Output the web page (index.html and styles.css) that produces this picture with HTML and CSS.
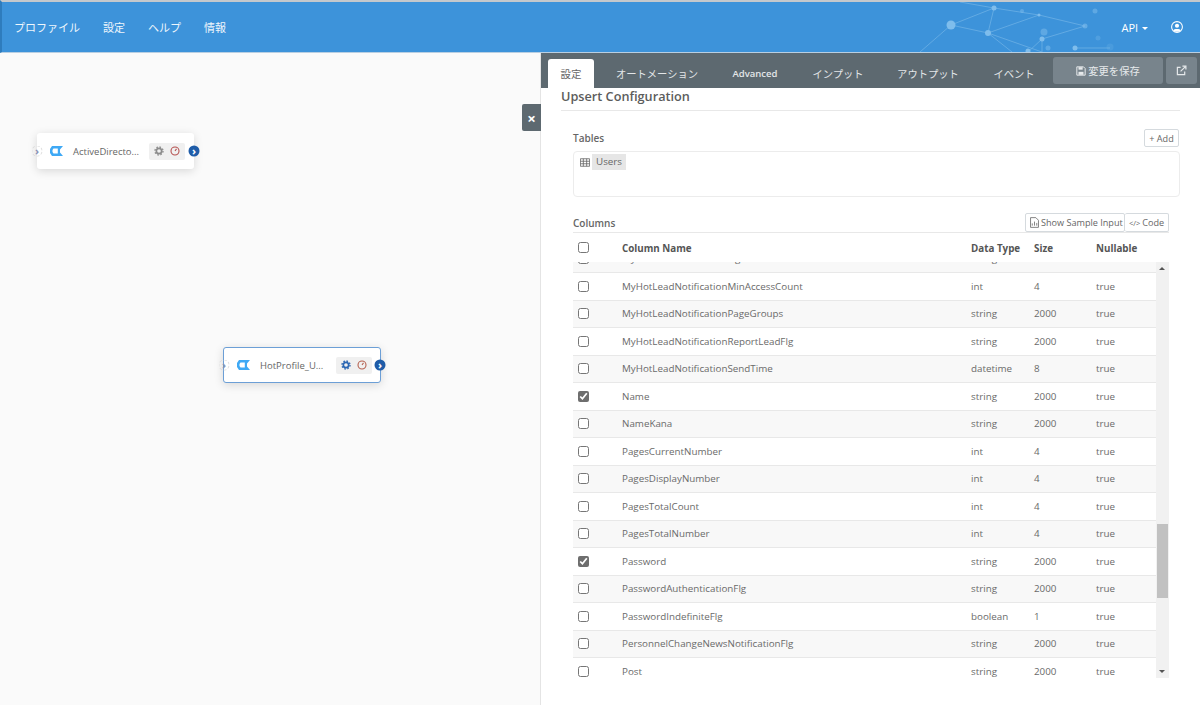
FILE: index.html
```html
<!DOCTYPE html>
<html lang="ja">
<head>
    <meta charset="UTF-8">
    <title>Upsert Configuration</title>
    <link rel="stylesheet" href="styles.css">
</head>
<body>
    <header class="topbar">
        <nav class="topnav">
            <a>プロファイル</a>
            <a>設定</a>
            <a>ヘルプ</a>
            <a>情報</a>
        </nav>
        <svg class="network" viewBox="0 0 220 50" width="220" height="50">
            <g stroke="#8cc4ee" stroke-width="0.8" opacity="0.6" fill="none">
                <path d="M31 23 L74 6 L68 31 L31 23"/>
                <path d="M74 6 L119 13 L68 31 L92 50"/>
                <path d="M68 31 L122 50"/>
                <path d="M119 13 L165 24 L122 37 L108 50"/>
                <path d="M122 37 V50"/>
                <path d="M155 46 L190 46"/>
                <path d="M31 23 L0 50"/>
                <path d="M74 6 L40 0"/>
            </g>
            <g fill="#7fbdec">
                <circle cx="31" cy="23" r="4.5"/>
                <circle cx="74" cy="6" r="2.5"/>
                <circle cx="68" cy="31" r="3"/>
                <circle cx="119" cy="13" r="1.5"/>
                <circle cx="102" cy="9" r="2" opacity="0.5"/>
                <circle cx="122" cy="37" r="2.5"/>
                <circle cx="108" cy="49" r="2.5"/>
                <circle cx="155" cy="46" r="2.5"/>
                <circle cx="165" cy="24" r="2.5" opacity="0.6"/>
                <circle cx="124" cy="30" r="3.5" opacity="0.5"/>
                <circle cx="128" cy="46" r="2.5" opacity="0.5"/>
                <circle cx="175" cy="9" r="2.5" opacity="0.5"/>
                <circle cx="178" cy="36" r="2.5" opacity="0.3"/>
                <circle cx="190" cy="45" r="3.5" opacity="0.2"/>
            </g>
        </svg>
        <div class="topright">
            <a class="api">API <span class="caret"></span></a>
            <svg class="user" viewBox="0 0 16 16" width="12" height="12">
                <circle cx="8" cy="8" r="7.2" fill="none" stroke="#fff" stroke-width="1.4"/>
                <circle cx="8" cy="6.3" r="2.8" fill="#fff"/>
                <path d="M3 12.6 C4 10 12 10 13 12.6 C11 15 5 15 3 12.6Z" fill="#fff"/>
            </svg>
        </div>
    </header>

    <main class="workspace">
        <section class="canvas">
            <div class="node node-source">
                <span class="port port-in">›</span>
                <svg class="node-icon" viewBox="0 0 14 12" width="14" height="12">
                    <path d="M3 1 H14 L11 4.5 V7.5 L14 11 H3 L1 8 V4 Z M4.5 3.5 L3.5 5 V7 L4.5 8.5 H8.8 V3.5 Z" fill="#3fa9f5" fill-rule="evenodd"/>
                </svg>
                <span class="node-name">ActiveDirecto...</span>
                <div class="node-actions">
                    <svg viewBox="0 0 12 12" width="10" height="10">
                        <circle cx="6" cy="6" r="3.2" fill="none" stroke="#8c8c8c" stroke-width="2"/>
                        <circle cx="6" cy="6" r="4.8" fill="none" stroke="#8c8c8c" stroke-width="1.6" stroke-dasharray="1.9 1.87"/>
                    </svg>
                    <svg viewBox="0 0 12 12" width="10" height="10">
                        <circle cx="6" cy="6" r="4.8" fill="none" stroke="#b5504f" stroke-width="1.3"/>
                        <path d="M6 6 L7.8 3.4" stroke="#b5504f" stroke-width="1.3"/>
                    </svg>
                </div>
                <span class="port port-out">›</span>
            </div>

            <div class="node node-target">
                <span class="port port-in">›</span>
                <svg class="node-icon" viewBox="0 0 14 12" width="14" height="12">
                    <path d="M3 1 H14 L11 4.5 V7.5 L14 11 H3 L1 8 V4 Z M4.5 3.5 L3.5 5 V7 L4.5 8.5 H8.8 V3.5 Z" fill="#3fa9f5" fill-rule="evenodd"/>
                </svg>
                <span class="node-name">HotProfile_U...</span>
                <div class="node-actions">
                    <svg viewBox="0 0 12 12" width="10" height="10">
                        <circle cx="6" cy="6" r="3.2" fill="none" stroke="#2a66b3" stroke-width="2"/>
                        <circle cx="6" cy="6" r="4.8" fill="none" stroke="#2a66b3" stroke-width="1.6" stroke-dasharray="1.9 1.87"/>
                    </svg>
                    <svg viewBox="0 0 12 12" width="10" height="10">
                        <circle cx="6" cy="6" r="4.8" fill="none" stroke="#b5604f" stroke-width="1.3"/>
                        <path d="M6 6 L7.8 3.4" stroke="#b5604f" stroke-width="1.3"/>
                    </svg>
                </div>
                <span class="port port-out">›</span>
            </div>

            <button class="panel-close">×</button>
        </section>

        <section class="panel">
            <div class="tabs">
                <a class="tab tab-active">設定</a>
                <a class="tab tab-auto">オートメーション</a>
                <a class="tab tab-adv">Advanced</a>
                <a class="tab tab-in">インプット</a>
                <a class="tab tab-out">アウトプット</a>
                <a class="tab tab-event">イベント</a>
                <button class="save-btn">
                    <svg viewBox="0 0 12 12" width="10" height="10">
                        <path d="M1 1 H9 L11 3 V11 H1 Z" fill="none" stroke="#e6e9eb" stroke-width="1.2"/>
                        <rect x="3" y="1.4" width="5" height="3" fill="#e6e9eb"/>
                        <rect x="3" y="7" width="6" height="3.6" fill="#e6e9eb"/>
                    </svg>
                    変更を保存
                </button>
                <button class="popout-btn">
                    <svg viewBox="0 0 12 12" width="11" height="11">
                        <path d="M9.5 7 V10.5 H1.5 V2.5 H5" fill="none" stroke="#e6e9eb" stroke-width="1.3"/>
                        <path d="M5 7 L10 2 M7 1.2 H10.8 V5" fill="none" stroke="#e6e9eb" stroke-width="1.3"/>
                    </svg>
                </button>
            </div>

            <div class="panel-body">
                <h3 class="section-title">Upsert Configuration</h3>

                <div class="tables-head">
                    <label>Tables</label>
                    <button class="small-btn">+ Add</button>
                </div>
                <div class="tables-box">
                    <svg class="table-icon" viewBox="0 0 12 10" width="10" height="9">
                        <path d="M.5 .5 H11.5 V9.5 H.5 Z M.5 3.5 H11.5 M.5 6.5 H11.5 M4 .5 V9.5 M8 .5 V9.5" fill="none" stroke="#666" stroke-width="1"/>
                    </svg>
                    <span class="chip">Users</span>
                </div>

                <div class="columns-block">
                    <div class="columns-head">
                        <label>Columns</label>
                        <div class="btn-group">
                            <button class="small-btn btn-sample">
                                <svg viewBox="0 0 10 12" width="9" height="11">
                                    <path d="M.6 .6 H6.5 L9.4 3.5 V11.4 H.6 Z" fill="none" stroke="#777" stroke-width="1"/>
                                    <path d="M2.5 9.5 V7 M5 9.5 V5 M7.5 9.5 V6.5" stroke="#777" stroke-width="1"/>
                                </svg>
                                Show Sample Input
                            </button>
                            <button class="small-btn btn-code"><span class="code-glyph">&lt;/&gt;</span> Code</button>
                        </div>
                    </div>

                    <div class="col-row col-header">
                        <span class="col-check"><input type="checkbox"></span>
                        <span class="col-name">Column Name</span>
                        <span class="col-type">Data Type</span>
                        <span class="col-size">Size</span>
                        <span class="col-null">Nullable</span>
                    </div>

                    <div class="col-scroll">
                        <div class="col-rows">
                            <div class="col-row"><span class="col-check"><input type="checkbox"></span><span class="col-name">MyHotLeadNotificationFlg</span><span class="col-type">string</span><span class="col-size">2000</span><span class="col-null">true</span></div>
                            <div class="col-row"><span class="col-check"><input type="checkbox"></span><span class="col-name">MyHotLeadNotificationMinAccessCount</span><span class="col-type">int</span><span class="col-size">4</span><span class="col-null">true</span></div>
                            <div class="col-row"><span class="col-check"><input type="checkbox"></span><span class="col-name">MyHotLeadNotificationPageGroups</span><span class="col-type">string</span><span class="col-size">2000</span><span class="col-null">true</span></div>
                            <div class="col-row"><span class="col-check"><input type="checkbox"></span><span class="col-name">MyHotLeadNotificationReportLeadFlg</span><span class="col-type">string</span><span class="col-size">2000</span><span class="col-null">true</span></div>
                            <div class="col-row"><span class="col-check"><input type="checkbox"></span><span class="col-name">MyHotLeadNotificationSendTime</span><span class="col-type">datetime</span><span class="col-size">8</span><span class="col-null">true</span></div>
                            <div class="col-row"><span class="col-check"><input type="checkbox" checked></span><span class="col-name">Name</span><span class="col-type">string</span><span class="col-size">2000</span><span class="col-null">true</span></div>
                            <div class="col-row"><span class="col-check"><input type="checkbox"></span><span class="col-name">NameKana</span><span class="col-type">string</span><span class="col-size">2000</span><span class="col-null">true</span></div>
                            <div class="col-row"><span class="col-check"><input type="checkbox"></span><span class="col-name">PagesCurrentNumber</span><span class="col-type">int</span><span class="col-size">4</span><span class="col-null">true</span></div>
                            <div class="col-row"><span class="col-check"><input type="checkbox"></span><span class="col-name">PagesDisplayNumber</span><span class="col-type">int</span><span class="col-size">4</span><span class="col-null">true</span></div>
                            <div class="col-row"><span class="col-check"><input type="checkbox"></span><span class="col-name">PagesTotalCount</span><span class="col-type">int</span><span class="col-size">4</span><span class="col-null">true</span></div>
                            <div class="col-row"><span class="col-check"><input type="checkbox"></span><span class="col-name">PagesTotalNumber</span><span class="col-type">int</span><span class="col-size">4</span><span class="col-null">true</span></div>
                            <div class="col-row"><span class="col-check"><input type="checkbox" checked></span><span class="col-name">Password</span><span class="col-type">string</span><span class="col-size">2000</span><span class="col-null">true</span></div>
                            <div class="col-row"><span class="col-check"><input type="checkbox"></span><span class="col-name">PasswordAuthenticationFlg</span><span class="col-type">string</span><span class="col-size">2000</span><span class="col-null">true</span></div>
                            <div class="col-row"><span class="col-check"><input type="checkbox"></span><span class="col-name">PasswordIndefiniteFlg</span><span class="col-type">boolean</span><span class="col-size">1</span><span class="col-null">true</span></div>
                            <div class="col-row"><span class="col-check"><input type="checkbox"></span><span class="col-name">PersonnelChangeNewsNotificationFlg</span><span class="col-type">string</span><span class="col-size">2000</span><span class="col-null">true</span></div>
                            <div class="col-row"><span class="col-check"><input type="checkbox"></span><span class="col-name">Post</span><span class="col-type">string</span><span class="col-size">2000</span><span class="col-null">true</span></div>
                        </div>
                        <div class="scrollbar">
                            <span class="arrow arrow-up"></span>
                            <span class="thumb"></span>
                            <span class="arrow arrow-down"></span>
                        </div>
                    </div>
                </div>
            </div>
        </section>
    </main>
</body>
</html>
```

FILE: styles.css
```css
* {
    margin: 0;
    padding: 0;
    box-sizing: border-box;
}

body {
    font-family: "Open Sans", "Noto Sans CJK JP", sans-serif;
    font-size: 10.5px;
    color: #666;
    background: #fff;
    height: 705px;
    overflow: hidden;
}

button {
    font-family: inherit;
}

/* top bar */
.topbar {
    height: 53px;
    background: #3d93da;
    border-top: 2px solid #c4c8cc;
    border-left: 2px solid #2e7cbd;
    border-bottom: 1px solid #b9cfe2;
    display: flex;
    align-items: center;
    padding: 0 17px 0 12px;
    position: relative;
}

.topnav {
    display: flex;
    gap: 23px;
    color: #eef6fc;
    font-size: 11px;
}

.network {
    position: absolute;
    left: 918px;
    top: 0;
}

.topright {
    margin-left: auto;
    display: flex;
    align-items: center;
    gap: 23px;
    color: #fff;
    font-size: 11px;
    position: relative;
}

.caret {
    display: inline-block;
    border-top: 3px solid #fff;
    border-left: 3px solid transparent;
    border-right: 3px solid transparent;
    vertical-align: middle;
    margin-left: 1px;
}

.user {
    display: block;
}

/* layout */
.workspace {
    display: flex;
    height: 652px;
}

.canvas {
    width: 541px;
    background: #fafafa;
    border-right: 1px solid #e4e4e4;
    position: relative;
}

.panel {
    flex: 1;
    min-width: 0;
}

/* flow nodes */
.node {
    position: absolute;
    height: 36px;
    background: #fff;
    border-radius: 3px;
    box-shadow: 0 2px 10px rgba(0,0,0,0.14);
    display: flex;
    align-items: center;
    padding-left: 12px;
    color: #666;
}

.node-source {
    left: 37px;
    top: 80px;
    width: 157px;
}

.node-target {
    left: 223px;
    top: 294px;
    width: 158px;
    border: 1px solid #6c9fd6;
}

.node-name {
    margin-left: 10px;
    width: 76px;
    white-space: nowrap;
    font-size: 9.5px;
}

.node-actions {
    width: 36px;
    height: 17px;
    background: #f0f0f0;
    border-radius: 2px;
    display: flex;
    align-items: center;
    justify-content: space-around;
    padding: 0 2px;
}

.port {
    position: absolute;
    top: 50%;
    transform: translate(-50%, -50%);
    width: 11px;
    height: 11px;
    border-radius: 50%;
    display: flex;
    align-items: center;
    justify-content: center;
    font-size: 11px;
    font-weight: 700;
    line-height: 1;
    padding-bottom: 2px;
}

.port-in {
    left: 0;
    color: #8a93b5;
    border: 1px dashed #ddd;
}

.port-out {
    left: 100%;
    background: #1f5ca8;
    color: #fff;
}

.panel-close {
    position: absolute;
    right: -1px;
    top: 51px;
    width: 19px;
    height: 27px;
    background: #5d6970;
    color: #fff;
    border: 0;
    border-radius: 2px 0 0 2px;
    font-size: 15px;
    font-weight: 700;
}

/* tabs */
.tabs {
    height: 35px;
    background: #5d6970;
    display: flex;
    align-items: flex-end;
    padding-left: 7px;
    position: relative;
    color: #e3e6e8;
    font-size: 10.3px;
}

.tab {
    height: 29px;
    display: flex;
    align-items: center;
    justify-content: center;
    flex-shrink: 0;
}

.tab-active {
    width: 46px;
    background: #fff;
    color: #666;
    font-size: 10.5px;
    border-radius: 3px 3px 0 0;
}

.tab-auto {
    width: 126px;
}

.tab-adv {
    width: 70px;
    font-size: 9.5px;
    font-weight: 600;
}

.tab-in {
    width: 96px;
}

.tab-out {
    width: 84px;
}

.tab-event {
    width: 88px;
}

.save-btn,
.popout-btn {
    position: absolute;
    top: 4px;
    height: 27px;
    background: #78848c;
    border: 0;
    border-radius: 3px;
    color: #e6e9eb;
    font-size: 10.3px;
    display: flex;
    align-items: center;
    justify-content: center;
    gap: 2px;
}

.save-btn {
    left: 512px;
    width: 110px;
}

.popout-btn {
    left: 625px;
    width: 31px;
}

/* panel body */
.panel-body {
    padding: 0 20px;
}

.section-title {
    font-size: 12.7px;
    font-weight: 600;
    color: #5c5c5c;
    height: 23px;
    line-height: 17px;
    border-bottom: 1px solid #e8e8e8;
}

.tables-head {
    display: flex;
    justify-content: space-between;
    align-items: flex-start;
    margin: 18px 1px 4px 12px;
    height: 18px;
}

.tables-head label,
.columns-head label {
    font-size: 10px;
    font-weight: 600;
    color: #666;
    line-height: 18px;
}

.small-btn {
    background: #fff;
    border: 1px solid #d5dade;
    border-radius: 2px;
    color: #666;
    font-size: 9.1px;
    height: 19px;
    padding: 0 4px;
    display: inline-flex;
    align-items: center;
    gap: 2px;
    white-space: nowrap;
}

.tables-head .small-btn {
    height: 18px;
    width: 35px;
    justify-content: center;
}

.tables-box {
    height: 46px;
    margin-left: 12px;
    border: 1px solid #ececec;
    border-radius: 4px;
    padding: 2px 6px;
    display: flex;
    align-items: flex-start;
    gap: 2px;
}

.table-icon {
    margin-top: 4px;
}

.chip {
    background: #e6e6e6;
    font-size: 9.8px;
    padding: 0 4px;
    height: 16px;
    line-height: 16px;
}

/* columns */
.columns-block {
    margin: 16px 11px 0 12px;
}

.columns-head {
    display: flex;
    align-items: center;
    justify-content: space-between;
    height: 20px;
    border-bottom: 1px solid #e8e8e8;
}

.btn-group {
    display: flex;
}

.btn-sample {
    width: 100px;
    padding: 0 0 0 4px;
}

.btn-code {
    width: 44px;
    border-left: 0;
    justify-content: center;
}

.code-glyph {
    font-size: 7.5px;
}

.col-row {
    display: flex;
    align-items: center;
    height: 27.5px;
    border-bottom: 1.5px solid #e8e8e8;
    font-size: 9.8px;
    color: #6a6a6a;
}

.col-check {
    width: 49px;
    padding-left: 5px;
    display: flex;
    align-items: center;
}

.col-check input {
    width: 11px;
    height: 11px;
    margin: 0;
    accent-color: #6e6e6e;
    display: block;
}

.col-name {
    width: 349px;
    white-space: nowrap;
}

.col-type {
    width: 63px;
}

.col-size {
    width: 62px;
}

.col-header {
    height: 29px;
    border-bottom: 0;
    font-weight: 700;
    color: #555;
}

.col-header .col-name,
.col-header .col-type,
.col-header .col-size,
.col-header .col-null {
    padding-top: 2px;
}

.col-scroll {
    display: flex;
    height: 416px;
    overflow: hidden;
}

.col-rows {
    flex: 1;
    min-width: 0;
    margin-top: -16.5px;
}

.col-rows .col-row:nth-child(odd) {
    background: #f8f8f8;
}

.scrollbar {
    width: 13px;
    background: #f1f1f1;
    position: relative;
}

.thumb {
    position: absolute;
    left: 1px;
    top: 262px;
    width: 11px;
    height: 74px;
    background: #c1c1c1;
}

.arrow {
    position: absolute;
    left: 3px;
    border-left: 3px solid transparent;
    border-right: 3px solid transparent;
}

.arrow-up {
    top: 5px;
    border-bottom: 3px solid #555;
}

.arrow-down {
    bottom: 5px;
    border-top: 3px solid #555;
}
```
